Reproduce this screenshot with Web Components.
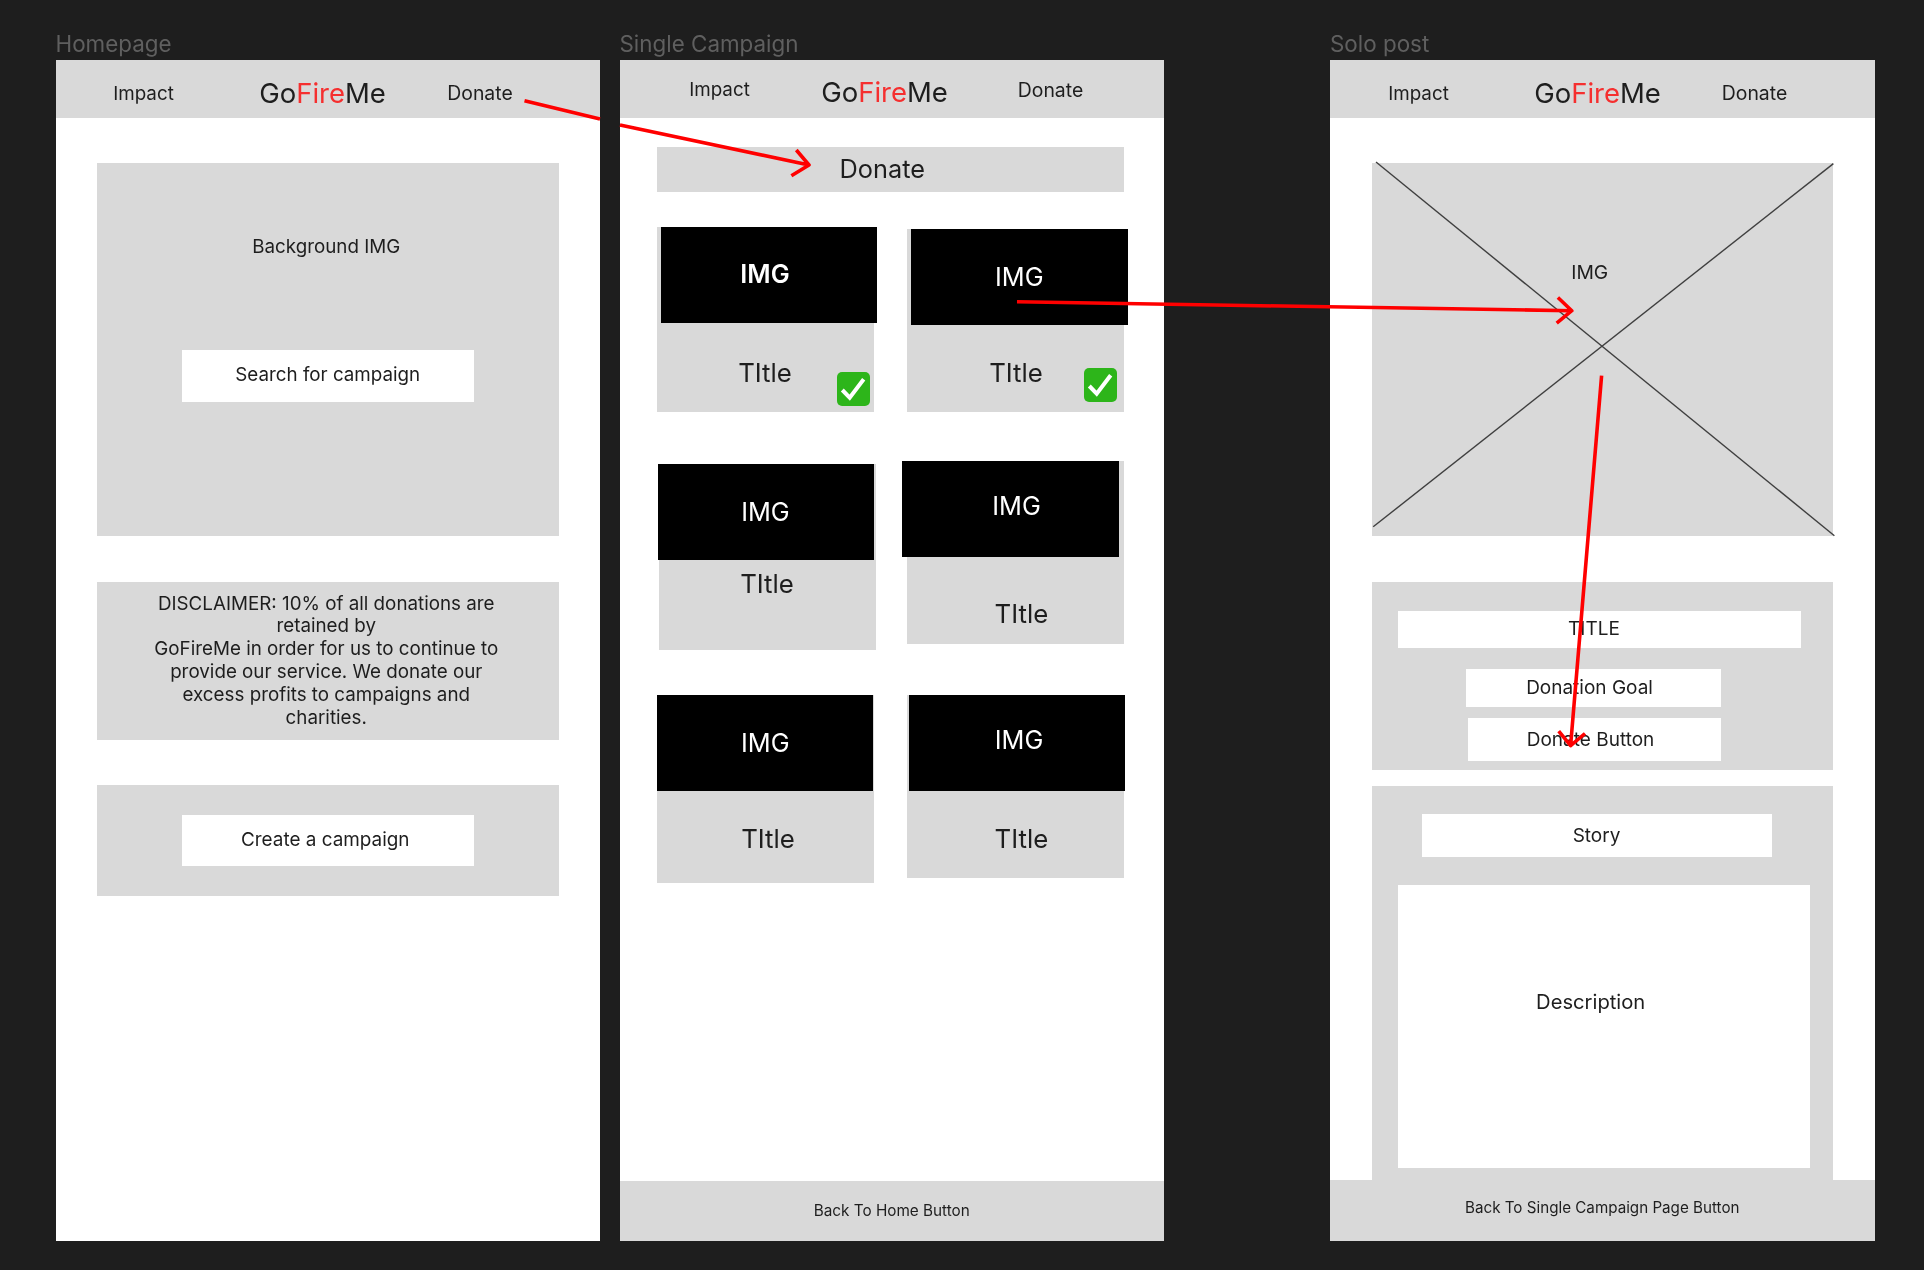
<!DOCTYPE html>
<html>
<head>
<meta charset="utf-8">
<title>GoFireMe wireframes</title>
<style>
    html, body { margin: 0; padding: 0; background: #1e1e1e; }
</style>
</head>
<body>
<wire-board>
    <wire-frame label="Homepage">
        <site-header style="--cols:176px 182px 133px;--top:8px"></site-header>
        <grey-panel style="margin:45px 0 0 41px;width:462.5px;height:373px;padding-top:73px">
            <span style="display:block;line-height:22px;font-size:18.8px;margin-right:3px">Background IMG</span>
            <white-box style="width:292.5px;height:52px;margin:92px auto 0;font-size:18.8px;padding-bottom:3px">Search for campaign</white-box>
        </grey-panel>
        <grey-panel style="margin:45.5px 0 0 41px;width:462.5px;height:158px;padding:11px 3px 0 0;font-size:18.8px;line-height:22.9px">
            DISCLAIMER: 10% of all donations are<br>retained by<br>GoFireMe in order for us to continue to<br>provide our service. We donate our<br>excess profits to campaigns and<br>charities.
        </grey-panel>
        <grey-panel style="margin:45.5px 0 0 41px;width:462.5px;height:110.5px;padding-top:29.5px">
            <white-box style="width:292.5px;height:51.5px;margin:0 auto;font-size:18.9px;padding:0 5px 1px 0">Create a campaign</white-box>
        </grey-panel>
    </wire-frame>

    <wire-frame label="Single Campaign" style="margin-left:19.5px">
        <site-header style="--cols:200px 130px 202px;--top:1px;--logo-top:4px"></site-header>
        <grey-panel style="margin:29px 0 0 37px;width:467.5px;height:45px;display:flex;align-items:center;justify-content:center;font-size:25.3px;padding:0 16px 3px 0">Donate</grey-panel>
        <campaign-grid>
            <campaign-card style="height:185px;--img-left:4px;--title-top:34.5px;--img-dx:-3.8px;--img-dy:-1px;--img-weight:600" checked="1"></campaign-card>
            <campaign-card style="height:183px;margin-top:2px;--img-left:4px;--title-top:33px;--title-dx:.5px" checked="2"></campaign-card>
            <campaign-card style="height:186px;margin:7px 0 0 2.7px;--img-left:-1.3px;--title-top:9px;--title-dx:-.7px;--img-dx:-.7px"></campaign-card>
            <campaign-card style="height:183px;margin-top:4px;--img-left:-4.7px;--title-top:42px;--title-dx:5.9px;--img-dx:6px;--img-dy:-3.5px"></campaign-card>
            <campaign-card style="height:188px;--title-top:32.5px;--title-dx:3px;--img-dx:.5px"></campaign-card>
            <campaign-card style="height:183px;--img-left:1.8px;--title-top:32.5px;--title-dx:5.9px;--img-dx:2px;--img-dy:-3.2px"></campaign-card>
        </campaign-grid>
        <back-bar style="height:59.5px;font-size:15.3px">Back To Home Button</back-bar>
    </wire-frame>

    <wire-frame label="Solo post" style="margin-left:166px">
        <site-header style="--cols:177px 181px 133px;--top:8px"></site-header>
        <image-panel></image-panel>
        <grey-panel style="margin:45.7px 0 0 41.5px;width:461.5px;height:188.5px;padding-top:29px;font-size:19px">
            <white-box style="margin-left:26px;width:403px;height:37px;padding-right:10px;padding-bottom:2px">TITLE</white-box>
            <white-box style="margin:21px 0 0 94.7px;width:254.7px;height:38.6px;padding-right:8px">Donation Goal</white-box>
            <white-box style="margin:11px 0 0 96.7px;width:252.7px;height:43px;padding-right:8px">Donate Button</white-box>
        </grey-panel>
        <grey-panel style="margin:15.5px 0 0 41.5px;width:461.5px;flex:1;padding-top:28px;font-size:19px">
            <white-box style="margin-left:50px;width:350px;height:43px">Story</white-box>
            <white-box style="margin:28px 0 0 26.7px;width:412px;height:283.5px;padding:0 27px 50px 0;font-size:20.2px">Description</white-box>
        </grey-panel>
        <back-bar style="height:60.5px;font-size:15.2px;padding-bottom:5px">Back To Single Campaign Page Button</back-bar>
    </wire-frame>

    <flow-arrows></flow-arrows>
</wire-board>

<script>
class WireElement extends HTMLElement {

    constructor() {
        super();
        if (!this.shadowRoot)
            this.attachShadow({mode: 'open'});
        this.shadowRoot.innerHTML = `<style>${this.componentStyle}</style>${this.markup}`;
    }

    get markup() {
        return `<slot></slot>`;
    }

    get componentStyle() {
        return ``;
    }
}

class WireBoard extends WireElement {
    get componentStyle() {
        return `:host {
        display: flex;
        position: relative;
        box-sizing: border-box;
        width: 1924px;
        height: 1270px;
        padding: 32.5px 0 0 55.5px;
        overflow: hidden;
        background: #1e1e1e;
        color: #1e1e1e;
        font-family: Inter, "Liberation Sans", sans-serif;
        filter: blur(.7px);
    }`
    }
}

class WireFrame extends WireElement {
    connectedCallback() {
        this.shadowRoot.querySelector('.label').textContent = this.getAttribute('label');
    }

    get markup() {
        return `<div class="label"></div><div class="page"><slot></slot></div>`;
    }

    get componentStyle() {
        return `:host {
        display: flex;
        flex-direction: column;
        width: 544.5px;
    }
    .label {
        height: 27.5px;
        line-height: 22px;
        font-size: 22.4px;
        color: #5f5f5f;
    }
    .page {
        display: flex;
        flex-direction: column;
        height: 1180.5px;
        background: #fff;
    }`
    }
}

class SiteHeader extends WireElement {
    get markup() {
        return `<span>Impact</span><span class="logo">Go<b>Fire</b>Me</span><span class="donate">Donate</span>`;
    }

    get componentStyle() {
        return `:host {
        display: grid;
        grid-template-columns: var(--cols);
        align-items: center;
        justify-items: center;
        box-sizing: border-box;
        flex: none;
        height: 58px;
        padding-top: var(--top, 0);
        background: #d9d9d9;
        font-size: 18.8px;
    }
    .logo {
        font-size: 27.5px;
        margin-top: var(--logo-top, 0);
    }
    .donate {
        font-size: 19.4px;
    }
    b {
        font-weight: 400;
        color: #f52f2f;
    }`
    }
}

class GreyPanel extends WireElement {
    get componentStyle() {
        return `:host {
        display: block;
        box-sizing: border-box;
        flex: none;
        background: #d9d9d9;
        text-align: center;
    }`
    }
}

class WhiteBox extends WireElement {
    get componentStyle() {
        return `:host {
        display: flex;
        align-items: center;
        justify-content: center;
        box-sizing: border-box;
        background: #fff;
    }`
    }
}

class ImagePanel extends WireElement {
    get markup() {
        return `<svg viewBox="0 0 461.5 373" width="461.5" height="373" aria-hidden="true">
            <line x1="4" y1="-1" x2="462.4" y2="372.7"/>
            <line x1="461.4" y1=".6" x2="1.2" y2="363.8"/>
        </svg><span>IMG</span>`;
    }

    get componentStyle() {
        return `:host {
        display: block;
        position: relative;
        box-sizing: border-box;
        flex: none;
        margin: 45px 0 0 41.5px;
        width: 461.5px;
        height: 373px;
        padding: 98px 25px 0 0;
        background: #d9d9d9;
        text-align: center;
        font-size: 19.3px;
        line-height: 22px;
    }
    svg {
        position: absolute;
        left: 0;
        top: 0;
        overflow: visible;
    }
    line {
        stroke: #3f3f3f;
        stroke-width: 1.4;
    }`
    }
}

class CampaignGrid extends WireElement {
    get componentStyle() {
        return `:host {
        display: grid;
        grid-template-columns: 217.5px 217px;
        column-gap: 33px;
        row-gap: 45px;
        align-items: start;
        align-content: start;
        flex: 1;
        margin: 35px 0 0 37px;
    }`
    }
}

class CampaignCard extends WireElement {
    connectedCallback() {
        let checked = this.getAttribute('checked');
        if (checked)
            this.shadowRoot.querySelector('.check').classList.add('at' + checked);
    }

    get markup() {
        return `<div class="img"><span>IMG</span></div>
        <div class="title">TItle</div>
        <svg class="check" viewBox="0 0 33 34" width="33" height="34" aria-hidden="true">
            <rect width="33" height="34" rx="5"/>
            <path d="M5.3 18 12.7 25.7 26.7 7.3"/>
        </svg>`;
    }

    get componentStyle() {
        return `:host {
        display: block;
        position: relative;
        box-sizing: border-box;
        width: 217px;
        background: #d9d9d9;
        line-height: 30px;
    }
    .img {
        display: flex;
        align-items: center;
        justify-content: center;
        width: 216.5px;
        height: 96px;
        margin-left: var(--img-left, 0);
        background: #000;
        color: #fff;
        font-size: 25.3px;
        font-weight: var(--img-weight, 400);
    }
    .img span {
        margin-left: calc(var(--img-dx, 0px) * 2);
        margin-top: calc(var(--img-dy, 0px) * 2);
    }
    .title {
        padding-top: var(--title-top);
        text-align: center;
        font-size: 25.8px;
        margin-left: calc(var(--title-dx, 0px) * 2);
    }
    .check {
        display: none;
        position: absolute;
    }
    .check rect {
        fill: #2db51a;
    }
    .check path {
        fill: none;
        stroke: #fff;
        stroke-width: 4;
    }
    .check.at1 {
        display: block;
        right: 3.5px;
        bottom: 6px;
    }
    .check.at2 {
        display: block;
        right: 7px;
        bottom: 10px;
    }`
    }
}

class BackBar extends WireElement {
    get componentStyle() {
        return `:host {
        display: flex;
        align-items: center;
        justify-content: center;
        box-sizing: border-box;
        flex: none;
        background: #d9d9d9;
    }`
    }
}

class FlowArrows extends WireElement {
    get markup() {
        return `<svg viewBox="0 0 1924 1270" width="1924" height="1270" aria-hidden="true">
            <path d="M524.5 100.7 600 119"/>
            <path d="M620 125 809 165M796.3 150 809 165 791.4 175.7"/>
            <path d="M1017 301.8 1571.8 310.7M1557.9 297.5 1571.8 310.7 1556.7 323.2"/>
            <path d="M1601.6 375.7 1570.6 745.7M1558.7 731.2 1570.6 745.7 1585 733.5"/>
        </svg>`;
    }

    get componentStyle() {
        return `:host {
        position: absolute;
        left: 0;
        top: 0;
    }
    svg {
        display: block;
    }
    path {
        fill: none;
        stroke: #f00;
        stroke-width: 3.6;
        stroke-linejoin: round;
    }`
    }
}

window.customElements.define('wire-board', WireBoard);
window.customElements.define('wire-frame', WireFrame);
window.customElements.define('site-header', SiteHeader);
window.customElements.define('grey-panel', GreyPanel);
window.customElements.define('white-box', WhiteBox);
window.customElements.define('image-panel', ImagePanel);
window.customElements.define('campaign-grid', CampaignGrid);
window.customElements.define('campaign-card', CampaignCard);
window.customElements.define('back-bar', BackBar);
window.customElements.define('flow-arrows', FlowArrows);
</script>
</body>
</html>
